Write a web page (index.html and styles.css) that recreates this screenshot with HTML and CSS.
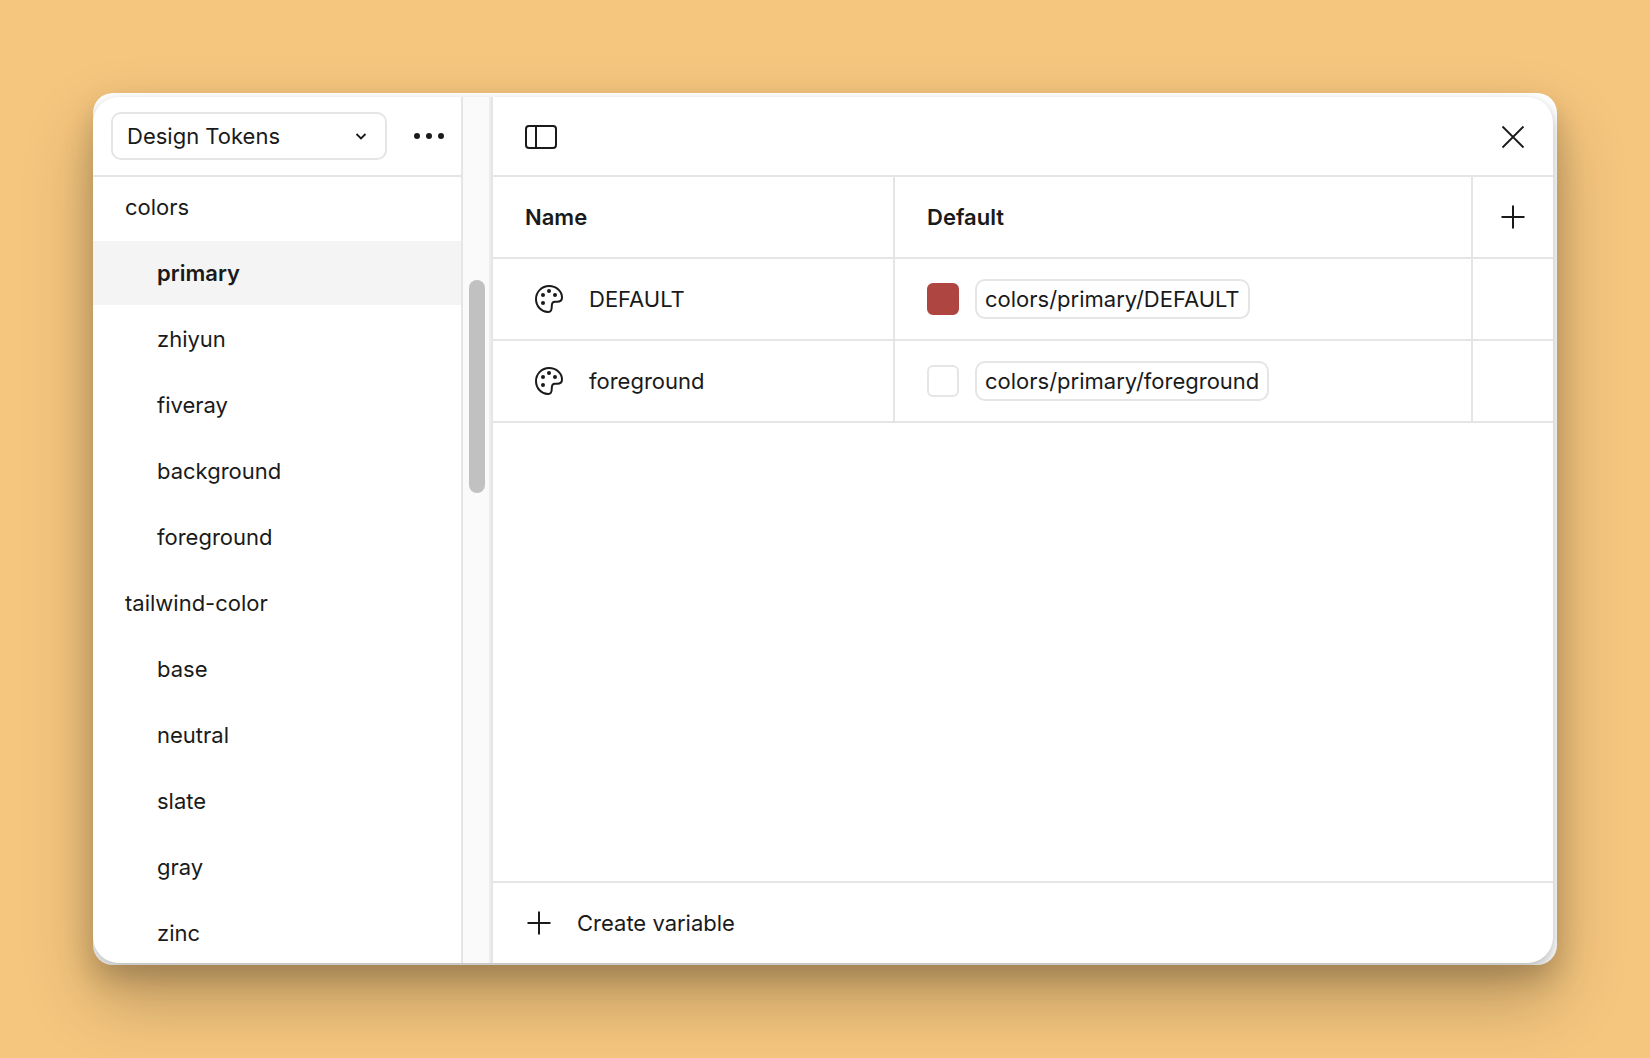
FILE: index.html
```html
<!DOCTYPE html>
<html lang="en">
<head>
<meta charset="utf-8">
<title>Design Tokens</title>
<link rel="stylesheet" href="styles.css">
</head>
<body>
<svg class="sprite" aria-hidden="true">
  <symbol id="plus" viewBox="0 0 32 32"><path d="M16 4.500v23M4.500 16h23"/></symbol>
  <symbol id="palette" viewBox="0 0 32 32">
    <path d="M15 29C8 28.600 3 23 3 16C3 9 8.800 3 16 3C23.500 3 29 8.500 29 14.500C29 17.400 26.800 18.800 24 18.800H22C19.600 18.800 18.800 20 18.800 23C18.800 27.500 17.600 29.200 15 29Z"/>
    <g class="dot"><circle cx="10" cy="12" r="2"/><circle cx="16" cy="8" r="2"/><circle cx="22" cy="12" r="2"/><circle cx="10" cy="20" r="2"/></g>
  </symbol>
</svg>
<div class="window">
  <div class="panel">
    <nav class="sidebar" aria-label="Variable groups">
      <div class="sidebar-header">
        <div class="picker">
          <select aria-label="Collection"><option>Design Tokens</option></select>
          <svg class="chevron" viewBox="0 0 12 8" aria-hidden="true"><path d="M1.500 2L6 6.500L10.500 2"/></svg>
        </div>
        <button class="icon-button" aria-label="More options">
          <svg class="icon" viewBox="0 0 32 32"><g class="dot"><circle cx="4" cy="16" r="3"/><circle cx="16" cy="16" r="3"/><circle cx="28" cy="16" r="3"/></g></svg>
        </button>
      </div>
      <ul class="groups">
        <li><a href="#colors">colors</a>
          <ul>
            <li><a href="#primary" aria-current="true">primary</a></li>
            <li><a href="#zhiyun">zhiyun</a></li>
            <li><a href="#fiveray">fiveray</a></li>
            <li><a href="#background">background</a></li>
            <li><a href="#foreground">foreground</a></li>
          </ul>
        </li>
        <li><a href="#tailwind-color">tailwind-color</a>
          <ul>
            <li><a href="#base">base</a></li>
            <li><a href="#neutral">neutral</a></li>
            <li><a href="#slate">slate</a></li>
            <li><a href="#gray">gray</a></li>
            <li><a href="#zinc">zinc</a></li>
          </ul>
        </li>
      </ul>
    </nav>
    <div class="scrollbar"><div class="thumb"></div></div>
    <main class="content">
      <header class="toolbar">
        <button class="icon-button" aria-label="Toggle sidebar">
          <svg class="icon" viewBox="0 0 32 32"><rect x="1" y="6" width="30" height="22" rx="3"/><path d="M11 6v22"/></svg>
        </button>
        <button class="icon-button" aria-label="Close">
          <svg class="icon thin" viewBox="0 0 32 32"><path d="M5.500 6.500l21 21M26.500 6.500l-21 21"/></svg>
        </button>
      </header>
      <table class="variables">
        <colgroup><col class="col-name"><col><col class="col-add"></colgroup>
        <thead>
          <tr>
            <th scope="col">Name</th>
            <th scope="col">Default</th>
            <td><button class="icon-button" aria-label="Add mode"><svg class="icon" viewBox="0 0 32 32"><use href="#plus"/></svg></button></td>
          </tr>
        </thead>
        <tbody>
          <tr>
            <td><div class="name"><svg class="icon" viewBox="0 0 32 32" aria-hidden="true"><use href="#palette"/></svg>DEFAULT</div></td>
            <td><div class="value"><span class="swatch red"></span><span class="chip">colors/primary/DEFAULT</span></div></td>
            <td></td>
          </tr>
          <tr>
            <td><div class="name"><svg class="icon" viewBox="0 0 32 32" aria-hidden="true"><use href="#palette"/></svg>foreground</div></td>
            <td><div class="value"><span class="swatch"></span><span class="chip">colors/primary/foreground</span></div></td>
            <td></td>
          </tr>
        </tbody>
      </table>
      <footer class="footer">
        <button class="create"><svg class="icon" viewBox="0 0 32 32" aria-hidden="true"><use href="#plus"/></svg>Create variable</button>
      </footer>
    </main>
  </div>
</div>
</body>
</html>
```

FILE: styles.css
```css
:root {
  --line: #e5e5e5;
  --text: #1a1a1a;
}

* {
  box-sizing: border-box;
}

body {
  display: flex;
  min-height: 100vh;
  margin: 0;
  padding: 93px;
  background: #f5c67e;
  color: var(--text);
  font: 22px/32px Inter, "Liberation Sans", sans-serif;
}

button,
select {
  margin: 0;
  padding: 0;
  border: 0;
  background: none;
  color: inherit;
  font: inherit;
}

ul {
  margin: 0;
  padding: 0;
  list-style: none;
}

.sprite {
  position: absolute;
  width: 0;
  height: 0;
}

.icon-button {
  display: block;
}

.icon {
  display: block;
  flex: none;
  width: 32px;
  height: 32px;
  fill: none;
  stroke: var(--text);
  stroke-width: 2;
}

.icon.thin {
  stroke-width: 1.8;
}

.dot {
  fill: var(--text);
  stroke: none;
}

.window {
  display: flex;
  flex: 1;
  min-width: 0;
  padding: 4px 4px 2px 0;
  overflow: hidden;
  border-radius: 20px;
  background: #fff;
  box-shadow: 0 14px 28px rgba(0, 0, 0, 0.18), 0 34px 70px rgba(0, 0, 0, 0.24);
}

.panel {
  display: flex;
  flex: 1;
  min-width: 0;
  overflow: hidden;
  border-radius: 26px;
  background: #fff;
  box-shadow: 0 8px 16px rgba(0, 0, 0, 0.2), 0 2px 8px rgba(0, 0, 0, 0.1);
}

.sidebar {
  display: flex;
  flex: none;
  flex-direction: column;
  width: 368px;
}

.sidebar-header {
  display: flex;
  flex: none;
  align-items: center;
  gap: 26px;
  height: 80px;
  padding: 0 16px 0 18px;
  border-bottom: 2px solid var(--line);
}

.picker {
  display: grid;
  flex: 1;
  align-items: center;
}

.picker > * {
  grid-area: 1 / 1;
}

.picker select {
  width: 100%;
  height: 48px;
  padding: 0 40px 0 14px;
  border: 2px solid var(--line);
  border-radius: 10px;
  appearance: none;
}

.chevron {
  justify-self: end;
  width: 12px;
  height: 8px;
  margin-right: 20px;
  fill: none;
  stroke: var(--text);
  stroke-width: 1.8;
  pointer-events: none;
}

.groups {
  flex: 1 1 0;
  min-height: 0;
  margin-top: -2px;
  overflow-y: auto;
  scrollbar-width: none;
}

.groups a {
  display: block;
  margin-bottom: 2px;
  padding: 16px 32px;
  color: inherit;
  text-decoration: none;
}

.groups ul a {
  padding-left: 64px;
}

.groups a[aria-current] {
  background: #f4f4f4;
  font-weight: 600;
}

.scrollbar {
  position: relative;
  flex: none;
  width: 32px;
  border: solid var(--line);
  border-width: 0 2px;
  background: #fafafa;
  box-shadow: inset -2px 0 #ededed;
}

.thumb {
  position: absolute;
  top: 183px;
  left: 6px;
  width: 16px;
  height: 213px;
  border-radius: 8px;
  background: #c1c1c1;
}

.content {
  display: flex;
  flex: 1;
  flex-direction: column;
  min-width: 0;
}

.toolbar {
  display: flex;
  align-items: center;
  justify-content: space-between;
  height: 80px;
  padding: 0 24px 0 32px;
  border-bottom: 2px solid var(--line);
}

.variables {
  width: 100%;
  border-spacing: 0;
  table-layout: fixed;
}

.col-name {
  width: 402px;
}

.col-add {
  width: 80px;
}

.variables th,
.variables td {
  height: 82px;
  padding: 0 32px;
  border: solid var(--line);
  border-width: 0 2px 2px 0;
  text-align: left;
}

.variables th {
  font-weight: 600;
}

.variables tr > :last-child {
  padding: 0 24px;
  border-right: 0;
}

.name,
.value {
  display: flex;
  align-items: center;
}

.name {
  gap: 24px;
  padding-left: 8px;
}

.value {
  gap: 16px;
}

.swatch {
  width: 32px;
  height: 32px;
  border: 2px solid var(--line);
  border-radius: 6px;
}

.swatch.red {
  border-color: #ae4540;
  background: #ae4540;
}

.chip {
  padding: 2px 8px;
  border: 2px solid var(--line);
  border-radius: 10px;
}

.footer {
  margin-top: auto;
  border-top: 2px solid var(--line);
}

.create {
  display: flex;
  align-items: center;
  gap: 22px;
  height: 80px;
  padding-left: 30px;
}
```
